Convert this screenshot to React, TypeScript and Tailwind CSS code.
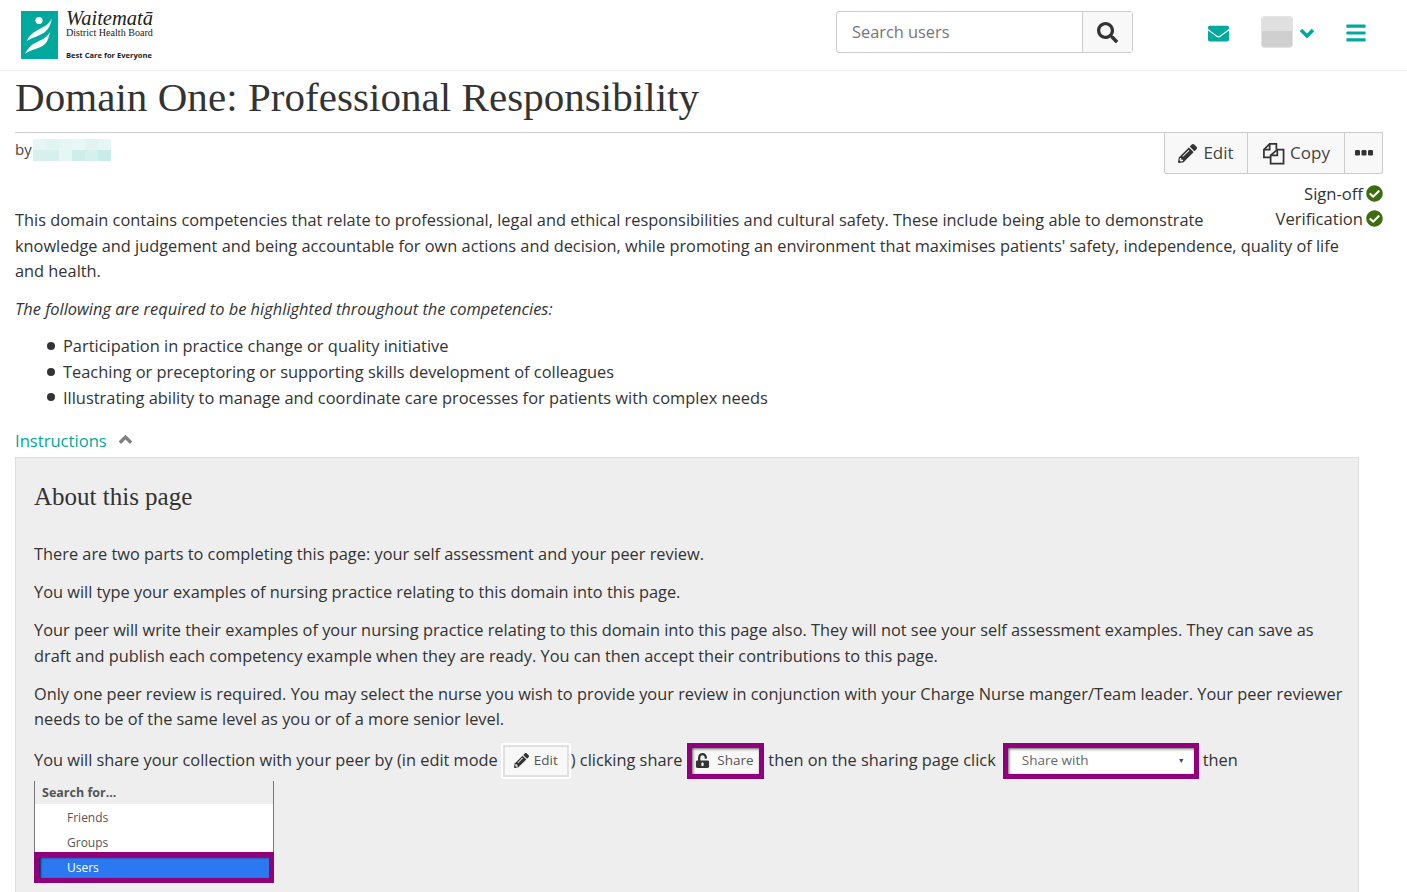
import React from 'react'
import { FaEnvelope, FaBars, FaSearch, FaPencilAlt, FaCheckCircle, FaUnlockAlt } from 'react-icons/fa'

const slab = "font-['Liberation_Serif',serif]"

const Chevron: React.FC<{ up?: boolean; className: string }> = ({ up, className }) => (
  <svg viewBox="0 0 16 11" className={className} fill="none" stroke="currentColor" strokeWidth="3.6">
    <path d={up ? 'M2 9 L8 3 L14 9' : 'M2 2 L8 8 L14 2'} />
  </svg>
)

const Logo: React.FC = () => (
  <div className="flex h-[70px] w-[200px] items-start pl-[21px] pt-[10px]">
    <svg width="37" height="49" viewBox="0 0 37 49" className="mt-px shrink-0">
      <rect width="37" height="48" fill="#00a99d" />
      <circle cx="18" cy="9.5" r="3.6" fill="#fff" />
      <path d="M31 7 C28 14 22 16 15 20 C10 23 7 26 6 30 C11 26 20 25 25 20 C29 16 30 12 31 7 Z" fill="#fff" />
      <path d="M29 21 C26 27 20 29 14 32 C10 34 6 38 4 43 C10 38 19 38 24 33 C27 30 28 25 29 21 Z" fill="#fff" />
    </svg>
    <div className="ml-2 w-[90px] text-[#222]">
      <div className="font-['Liberation_Serif',serif] text-[20.5px] italic leading-[17px] whitespace-nowrap">Waitematā</div>
      <div className="font-['Liberation_Serif',serif] text-[10.1px] leading-[12px] whitespace-nowrap">District Health Board</div>
      <div className="mt-[10px] font-['Open_Sans',sans-serif] text-[7.6px] font-bold leading-[12px] whitespace-nowrap">Best Care for Everyone</div>
    </div>
  </div>
)

const Header: React.FC = () => (
  <header className="flex h-[71px] items-start border-b border-[#eeeeee] bg-white">
    <Logo />
    <div className="ml-[636px] mt-[11px] flex h-[42px] w-[297px] rounded-[3px] border border-[#cccccc]">
      <div className="flex-1 px-[15px] leading-[40px] text-[#75757d]">Search users</div>
      <div className="flex w-[50px] items-center justify-center border-l border-[#cccccc] bg-[#f8f8f8]">
        <FaSearch className="h-[21px] w-[21px] text-[#333]" />
      </div>
    </div>
    <FaEnvelope className="ml-[74px] mt-[23px] h-[21px] w-[23px] text-[#00a99d]" />
    <div className="ml-[31px] mt-[16px] flex h-[32px] w-[32px] flex-col overflow-hidden rounded-[3px] border border-[#e4e4e4]">
      <div className="h-[14px] bg-[#e0e0e0]" />
      <div className="flex-1 bg-[#cfcfcf]" />
    </div>
    <Chevron className="ml-[6px] mt-[28px] h-[11px] w-[16px] text-[#00a99d]" />
    <FaBars className="ml-[31px] mt-[22px] h-[22px] w-[20px] text-[#00a99d]" />
  </header>
)

const nameBlur = [
  '#e6f6f4', '#e0f4f2', '#e6f6f4', '#e9f7f5', '#e0f4f2', '#e6f6f4',
  '#d6f0ed', '#d6f0ed', '#e6f6f4', '#cdeeea', '#d6f0ed', '#c8ece8',
]

const Actions: React.FC = () => (
  <div className="flex h-[41px] rounded-b-[3px] border border-t-0 border-[#cccccc] bg-[#f8f8f8] text-[17px] text-[#444]">
    <div className="flex w-[83px] items-center justify-center gap-[6px] border-r border-[#cccccc]">
      <FaPencilAlt className="h-[19px] w-[19px] text-[#333]" />
      Edit
    </div>
    <div className="flex w-[97px] items-center justify-center gap-[5px] border-r border-[#cccccc]">
      <svg viewBox="0 0 24 24" className="h-[23px] w-[23px] text-[#333]" fill="none" stroke="currentColor" strokeWidth="1.8">
        <path d="M9 16 H2 V8 L8 2 H15 V8" />
        <path d="M8 2 V8 H2" />
        <path d="M16 8 L9 14 V22.5 H22.5 V8 Z" />
        <path d="M16 8 V14 H9" />
      </svg>
      Copy
    </div>
    <div className="flex flex-1 items-center justify-center">
      <svg viewBox="0 0 18 6" className="h-[6px] w-[18px] text-[#333]" fill="currentColor">
        <rect x="0" y="0" width="5" height="5.5" rx="1.2" />
        <rect x="6.5" y="0" width="5" height="5.5" rx="1.2" />
        <rect x="13" y="0" width="5" height="5.5" rx="1.2" />
      </svg>
    </div>
  </div>
)

const Status: React.FC<{ label: string }> = ({ label }) => (
  <div className="flex h-[25px] items-center justify-end gap-[3px] text-[16.6px] text-[#333]">
    {label}
    <FaCheckCircle className="h-[17px] w-[17px] text-[#3c6e0f]" />
  </div>
)

const highlights = [
  'Participation in practice change or quality initiative',
  'Teaching or preceptoring or supporting skills development of colleagues',
  'Illustrating ability to manage and coordinate care processes for patients with complex needs',
]

const App: React.FC = () => {
  return (
    <div className="h-[892px] overflow-hidden bg-white font-['Open_Sans',sans-serif] text-[16.35px] leading-[25.6px] text-[#333]">
      <Header />

      <main className="pl-[15px] pr-[24px]">
        <h1 className={`${slab} h-[62px] border-b border-[#cccccc] text-[41px] font-normal leading-[52px] tracking-[0.05px] text-[#333]`}>
          Domain One: Professional Responsibility
        </h1>

        <div className="flex h-[42px] items-start justify-between">
          <div className="flex items-center pt-[4px] text-[15px] text-[#444]">
            by
            <span className="ml-[1px] grid h-[22px] w-[78px] grid-cols-6 grid-rows-2">
              {nameBlur.map((c, i) => (
                <span key={i} style={{ backgroundColor: c }} />
              ))}
            </span>
          </div>
          <div className="w-[219px]">
            <Actions />
          </div>
        </div>

        <div className="w-[1344px] pt-[6px]">
          <div className="float-right -mr-[24px] ml-[4px] w-[110px]">
            <Status label="Sign-off" />
            <Status label="Verification" />
          </div>
          <p className="pt-[27px]">
            This domain contains competencies that relate to professional, legal and ethical responsibilities and cultural safety. These include being able to demonstrate knowledge and judgement and being accountable for own actions and decision, while promoting an environment that maximises patients' safety, independence, quality of life and health.
          </p>
          <p className="mt-[11px] text-[16.45px] italic">The following are required to be highlighted throughout the competencies:</p>
          <ul className="mt-[12px] pl-[32px] text-[16.42px]">
            {highlights.map((item) => (
              <li key={item} className="flex items-center gap-[8px]">
                <span className="h-[8px] w-[8px] rounded-full bg-[#333]" />
                {item}
              </li>
            ))}
          </ul>

          <div className="mt-[18px] flex h-[25px] items-center gap-[11px] text-[16.6px] text-[#00a99d]">
            Instructions
            <Chevron up className="mb-[2px] h-[11px] w-[15px] text-[#808080]" />
          </div>

          <section className="mt-[4px] border border-[#dddddd] bg-[#eeeeee] pl-[18px] pr-[14px] pt-[24px] pb-[40px]">
            <h2 className={`${slab} text-[25px] font-normal leading-[30px] text-[#333]`}>About this page</h2>
            <p className="mt-[30px]">There are two parts to completing this page: your self assessment and your peer review.</p>
            <p className="mt-[12.4px]">You will type your examples of nursing practice relating to this domain into this page.</p>
            <p className="mt-[12.4px]">
              Your peer will write their examples of your nursing practice relating to this domain into this page also. They will not see your self assessment examples. They can save as draft and publish each competency example when they are ready. You can then accept their contributions to this page.
            </p>
            <p className="mt-[12.4px]">
              Only one peer review is required. You may select the nurse you wish to provide your review in conjunction with your Charge Nurse manger/Team leader. Your peer reviewer needs to be of the same level as you or of a more senior level.
            </p>

            <div className="mt-[9px] flex h-[38px] items-center whitespace-nowrap">
              You will share your collection with your peer by (in edit mode
              <span className="ml-[5px] flex h-[32px] w-[66px] items-center justify-center gap-[5px] border-2 border-[#e0e0e0] bg-[#f8f8f8] text-[13.5px] text-[#555] outline-2 outline-white">
                <FaPencilAlt className="h-[15px] w-[15px] text-[#333]" />
                Edit
              </span>
              <span className="ml-[2px]">) clicking share</span>
              <span className="ml-[5px] flex h-[36px] w-[77px] items-center gap-[7px] border-[5px] border-[#90007a] bg-[#f8f8f8] pl-[3px] text-[13.5px] text-[#555] shadow-[inset_1px_1px_3px_rgba(0,0,0,0.6)]">
                <FaUnlockAlt className="h-[15px] w-[15px] text-[#333]" />
                Share
              </span>
              <span className="ml-[4px]">then on the sharing page click</span>
              <span className="ml-[7px] flex h-[36px] w-[196px] items-center justify-between border-[5px] border-[#90007a] bg-white pl-[14px] pr-[9px] text-[13.5px] text-[#666] shadow-[inset_1px_1px_3px_rgba(0,0,0,0.6)]">
                Share with
                <span className="text-[7px] leading-none text-[#444]">▼</span>
              </span>
              <span className="ml-[4px]">then</span>
            </div>

            <div className="mt-[1px] w-[240px] border-x border-[#777] bg-white text-[12px] leading-[25px] text-[#555]">
              <div className="mb-px h-[23px] bg-[#eeeeee] pl-[7px] text-[12.5px] font-bold leading-[23px]">Search for...</div>
              <div className="pl-[32px]">Friends</div>
              <div className="h-[22px] pl-[32px]">Groups</div>
              <div className="-mx-px h-[31px] border-[5px] border-[#90007a] bg-[#2b78f0] pl-[28px] leading-[21px] text-white shadow-[inset_2px_1px_2px_rgba(0,0,0,0.6)]">Users</div>
            </div>
          </section>
        </div>
      </main>
    </div>
  )
}

export default App
